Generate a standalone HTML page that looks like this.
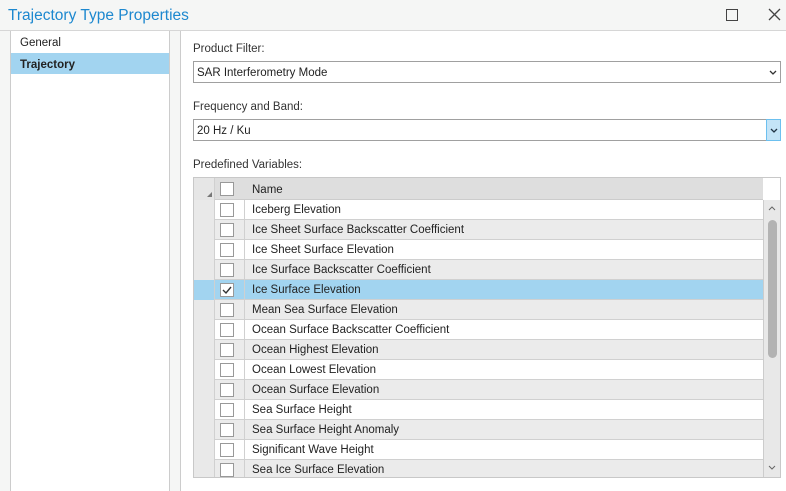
<!DOCTYPE html><html><head><style>
body{margin:0;width:786px;height:482px;background:#f5f6f5;font-family:"Liberation Sans",sans-serif;font-size:11.5px;color:#222;position:relative;overflow:hidden}
.a{position:absolute}
.t{left:8px;top:7px;font-size:15.5px;color:#1d88cf}
.row{position:absolute;left:0;width:569px;height:19px;border-bottom:1px solid #d0d0d0}
.rh{position:absolute;left:0;top:0;width:20px;height:20px;background:#e9e9e9;border-right:1px solid #d0d0d0}
.cb{position:absolute;left:26px;top:3px;width:12px;height:12px;border:1px solid #999;background:#fff}
.cc{position:absolute;left:50px;top:0;width:0;height:20px;border-left:1px solid #d0d0d0}
.nm{position:absolute;left:58px;top:4px}
.dd{position:absolute;left:193px;width:586px;height:20px;border:1px solid #a0a0a0;background:#fff}
.dd span{position:absolute;left:3px;top:5px}
</style></head><body>
<div class="a t">Trajectory Type Properties</div>
<div class="a" style="left:726px;top:9px;width:10px;height:10px;border:1.5px solid #444"></div>
<svg class="a" style="left:768px;top:8px" width="13" height="13"><path d="M1 1L12 12M12 1L1 12" stroke="#444" stroke-width="1.3"/></svg>
<div class="a" style="left:0;top:30px;width:786px;height:1px;background:#d6d6d6"></div>
<div class="a" style="left:10px;top:31px;width:158px;height:460px;background:#fff;border-left:1px solid #ccc;border-right:1px solid #ccc"></div>
<div class="a" style="left:11px;top:53px;width:158px;height:21px;background:#a2d4f0"></div>
<div class="a" style="left:20px;top:37px">General</div>
<div class="a" style="left:20px;top:59px;font-weight:bold">Trajectory</div>
<div class="a" style="left:180px;top:31px;width:606px;height:460px;background:#fff;border-left:1px solid #ccc"></div>
<div class="a" style="left:193px;top:43px;color:#333">Product Filter:</div>
<div class="dd" style="top:61px"><span>SAR Interferometry Mode</span><svg class="a" style="left:575px;top:8px" width="8" height="6"><path d="M1 1L4 4L7 1" stroke="#333" fill="none" stroke-width="1.3"/></svg></div>
<div class="a" style="left:193px;top:101px;color:#333">Frequency and Band:</div>
<div class="dd" style="top:119px;width:572px"><span>20 Hz / Ku</span></div>
<div class="a" style="left:766px;top:119px;width:13px;height:20px;background:#c4e4f7;border:1px solid #6cc0ef"><svg class="a" style="left:3px;top:8px" width="8" height="6"><path d="M1 1L4 4L7 1" stroke="#234" fill="none" stroke-width="1.3"/></svg></div>
<div class="a" style="left:193px;top:159px;color:#333">Predefined Variables:</div>
<div class="a" style="left:193px;top:177px;width:586px;height:299px;border:1px solid #c8c8c8;background:#fff;overflow:hidden">
<div class="row" style="top:0;height:21px;background:#dedede;border-bottom:1px solid #ccc"><div class="rh" style="height:22px;background:#e6e6e6"></div><svg class="a" style="left:13px;top:14px" width="5" height="5"><path d="M5 0L5 5L0 5Z" fill="#777"/></svg><div class="cb" style="top:4px"></div><div class="nm" style="top:6px">Name</div></div>
<div id="rows"></div>
<div class="a" style="left:569px;top:22px;width:17px;height:277px;background:#e8e8e8;border-left:1px solid #ccc"></div>
<div class="a" style="left:574px;top:42px;width:9px;height:138px;background:#b3b3b3;border-radius:5px"></div>
<svg class="a" style="left:574px;top:28px" width="8" height="5"><path d="M1 4L4 1L7 4" stroke="#666" fill="none"/></svg>
<svg class="a" style="left:574px;top:287px" width="8" height="5"><path d="M1 1L4 4L7 1" stroke="#666" fill="none"/></svg>
</div>
<script>
var n=["Iceberg Elevation","Ice Sheet Surface Backscatter Coefficient","Ice Sheet Surface Elevation","Ice Surface Backscatter Coefficient","Ice Surface Elevation","Mean Sea Surface Elevation","Ocean Surface Backscatter Coefficient","Ocean Highest Elevation","Ocean Lowest Elevation","Ocean Surface Elevation","Sea Surface Height","Sea Surface Height Anomaly","Significant Wave Height","Sea Ice Surface Elevation"],h="";
n.forEach(function(s,i){var bg=i==4?"#a2d4f0":(i%2?"#ebebeb":"#fff");var top=22+i*20;
h+='<div class="row" style="top:'+top+'px;background:'+bg+'"><div class="rh" style="'+(i==4?'background:#a2d4f0':'')+'"></div><div class="cb">'+(i==4?'<svg width="12" height="12"><path d="M2 6L5 9L10 3" stroke="#333" fill="none" stroke-width="1.4"/></svg>':'')+'</div><div class="cc"></div><div class="nm">'+s+'</div></div>';});
document.getElementById("rows").innerHTML=h;
</script>
</body></html>
